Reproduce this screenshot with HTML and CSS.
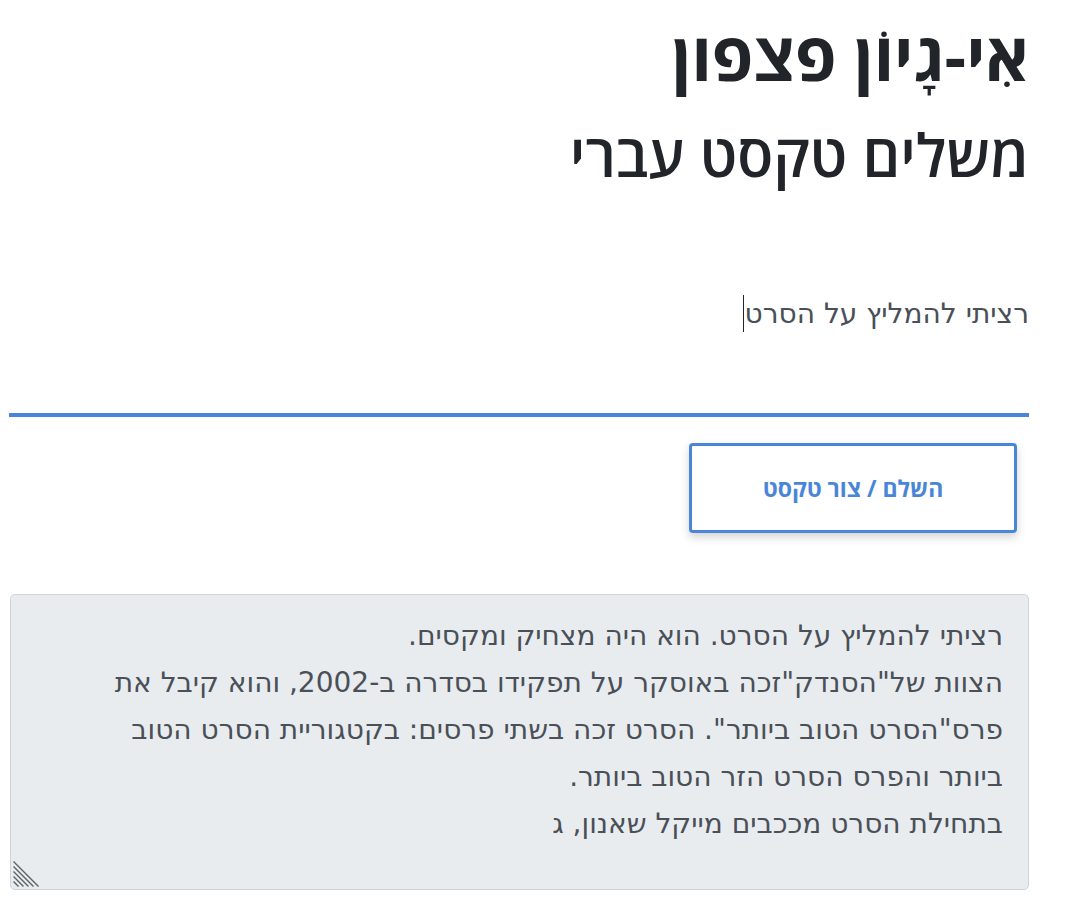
FILE: index.html
```html
<!DOCTYPE html>
<html lang="he" dir="rtl">
<head>
<meta charset="utf-8">
<title>אִי-גָיוֹן פצפון</title>
<link rel="stylesheet" href="styles.css">
</head>
<body>
<main class="page">
  <header class="heading">
    <h1 class="title">אִי-גָיוֹן פצפון</h1>
    <h2 class="subtitle">משלים טקסט עברי</h2>
  </header>
  <div class="prompt">
    <div class="prompt-text">רציתי להמליץ על הסרט<span class="caret"></span></div>
  </div>
  <div class="actions">
    <button class="btn" type="button">השלם / צור טקסט</button>
  </div>
  <div class="output-wrap">
    <textarea class="output" readonly>רציתי להמליץ על הסרט. הוא היה מצחיק ומקסים.
הצוות של"הסנדק"זכה באוסקר על תפקידו בסדרה ב-2002, והוא קיבל את פרס"הסרט הטוב ביותר". הסרט זכה בשתי פרסים: בקטגוריית הסרט הטוב ביותר והפרס הסרט הזר הטוב ביותר.
בתחילת הסרט מככבים מייקל שאנון, ג</textarea>
    <svg class="grip" width="26" height="26" viewBox="0 0 26 26" aria-hidden="true">
      <g stroke="#5f6368" stroke-width="1.4" stroke-linecap="square">
        <line x1="1" y1="1" x2="25" y2="25"/>
        <line x1="1" y1="6" x2="20" y2="25"/>
        <line x1="1" y1="11" x2="15" y2="25"/>
        <line x1="1" y1="16" x2="10" y2="25"/>
        <line x1="1" y1="21" x2="5" y2="25"/>
      </g>
    </svg>
  </div>
</main>
</body>
</html>
```
FILE: styles.css
```css
html, body {
  margin: 0;
  padding: 0;
  background: #ffffff;
}
body {
  font-family: "Open Sans", "DejaVu Sans", sans-serif;
  color: #212529;
}
.page {
  width: 1020px;
  margin-right: 40px;
  display: flex;
  flex-direction: column;
}
.heading {
  padding-top: 7px;
}
.title {
  margin: 0;
  font-size: 67px;
  font-weight: 700;
  line-height: 96px;
}
.subtitle {
  margin: 0;
  font-size: 59px;
  font-weight: 600;
  line-height: 102px;
}
.prompt {
  margin-top: 90px;
  height: 122px;
  border-bottom: 4px solid #4a86d8;
  box-sizing: border-box;
}
.prompt-text {
  font-family: "DejaVu Sans", sans-serif;
  font-size: 28px;
  color: #495057;
  line-height: 36px;
  display: inline-flex;
  align-items: center;
}
.caret {
  display: inline-block;
  width: 1px;
  height: 37px;
  background: #212529;
  margin-right: 1px;
}
.actions {
  display: flex;
  padding-top: 26px;
  padding-right: 12px;
}
.btn {
  width: 328px;
  height: 90px;
  background: #fff;
  border: 3px solid #4a86d8;
  border-radius: 4px;
  color: #4a86d8;
  font-family: "Open Sans", "DejaVu Sans", sans-serif;
  font-weight: 700;
  font-size: 23px;
  box-shadow: 0 4px 10px rgba(0,0,0,0.18);
  cursor: pointer;
}
.output-wrap {
  position: relative;
  margin-top: 61px;
  width: 1019px;
  height: 296px;
}
.output {
  display: block;
  box-sizing: border-box;
  width: 100%;
  height: 100%;
  margin: 0;
  background: #e9ecef;
  border: 1px solid #ced4da;
  border-radius: 5px;
  padding: 17px 25px 17px 60px;
  font-family: "DejaVu Sans", sans-serif;
  font-size: 28px;
  line-height: 47px;
  color: #495057;
  resize: none;
  outline: none;
  overflow: hidden;
}
.grip {
  position: absolute;
  left: 3px;
  bottom: 3px;
}
```
